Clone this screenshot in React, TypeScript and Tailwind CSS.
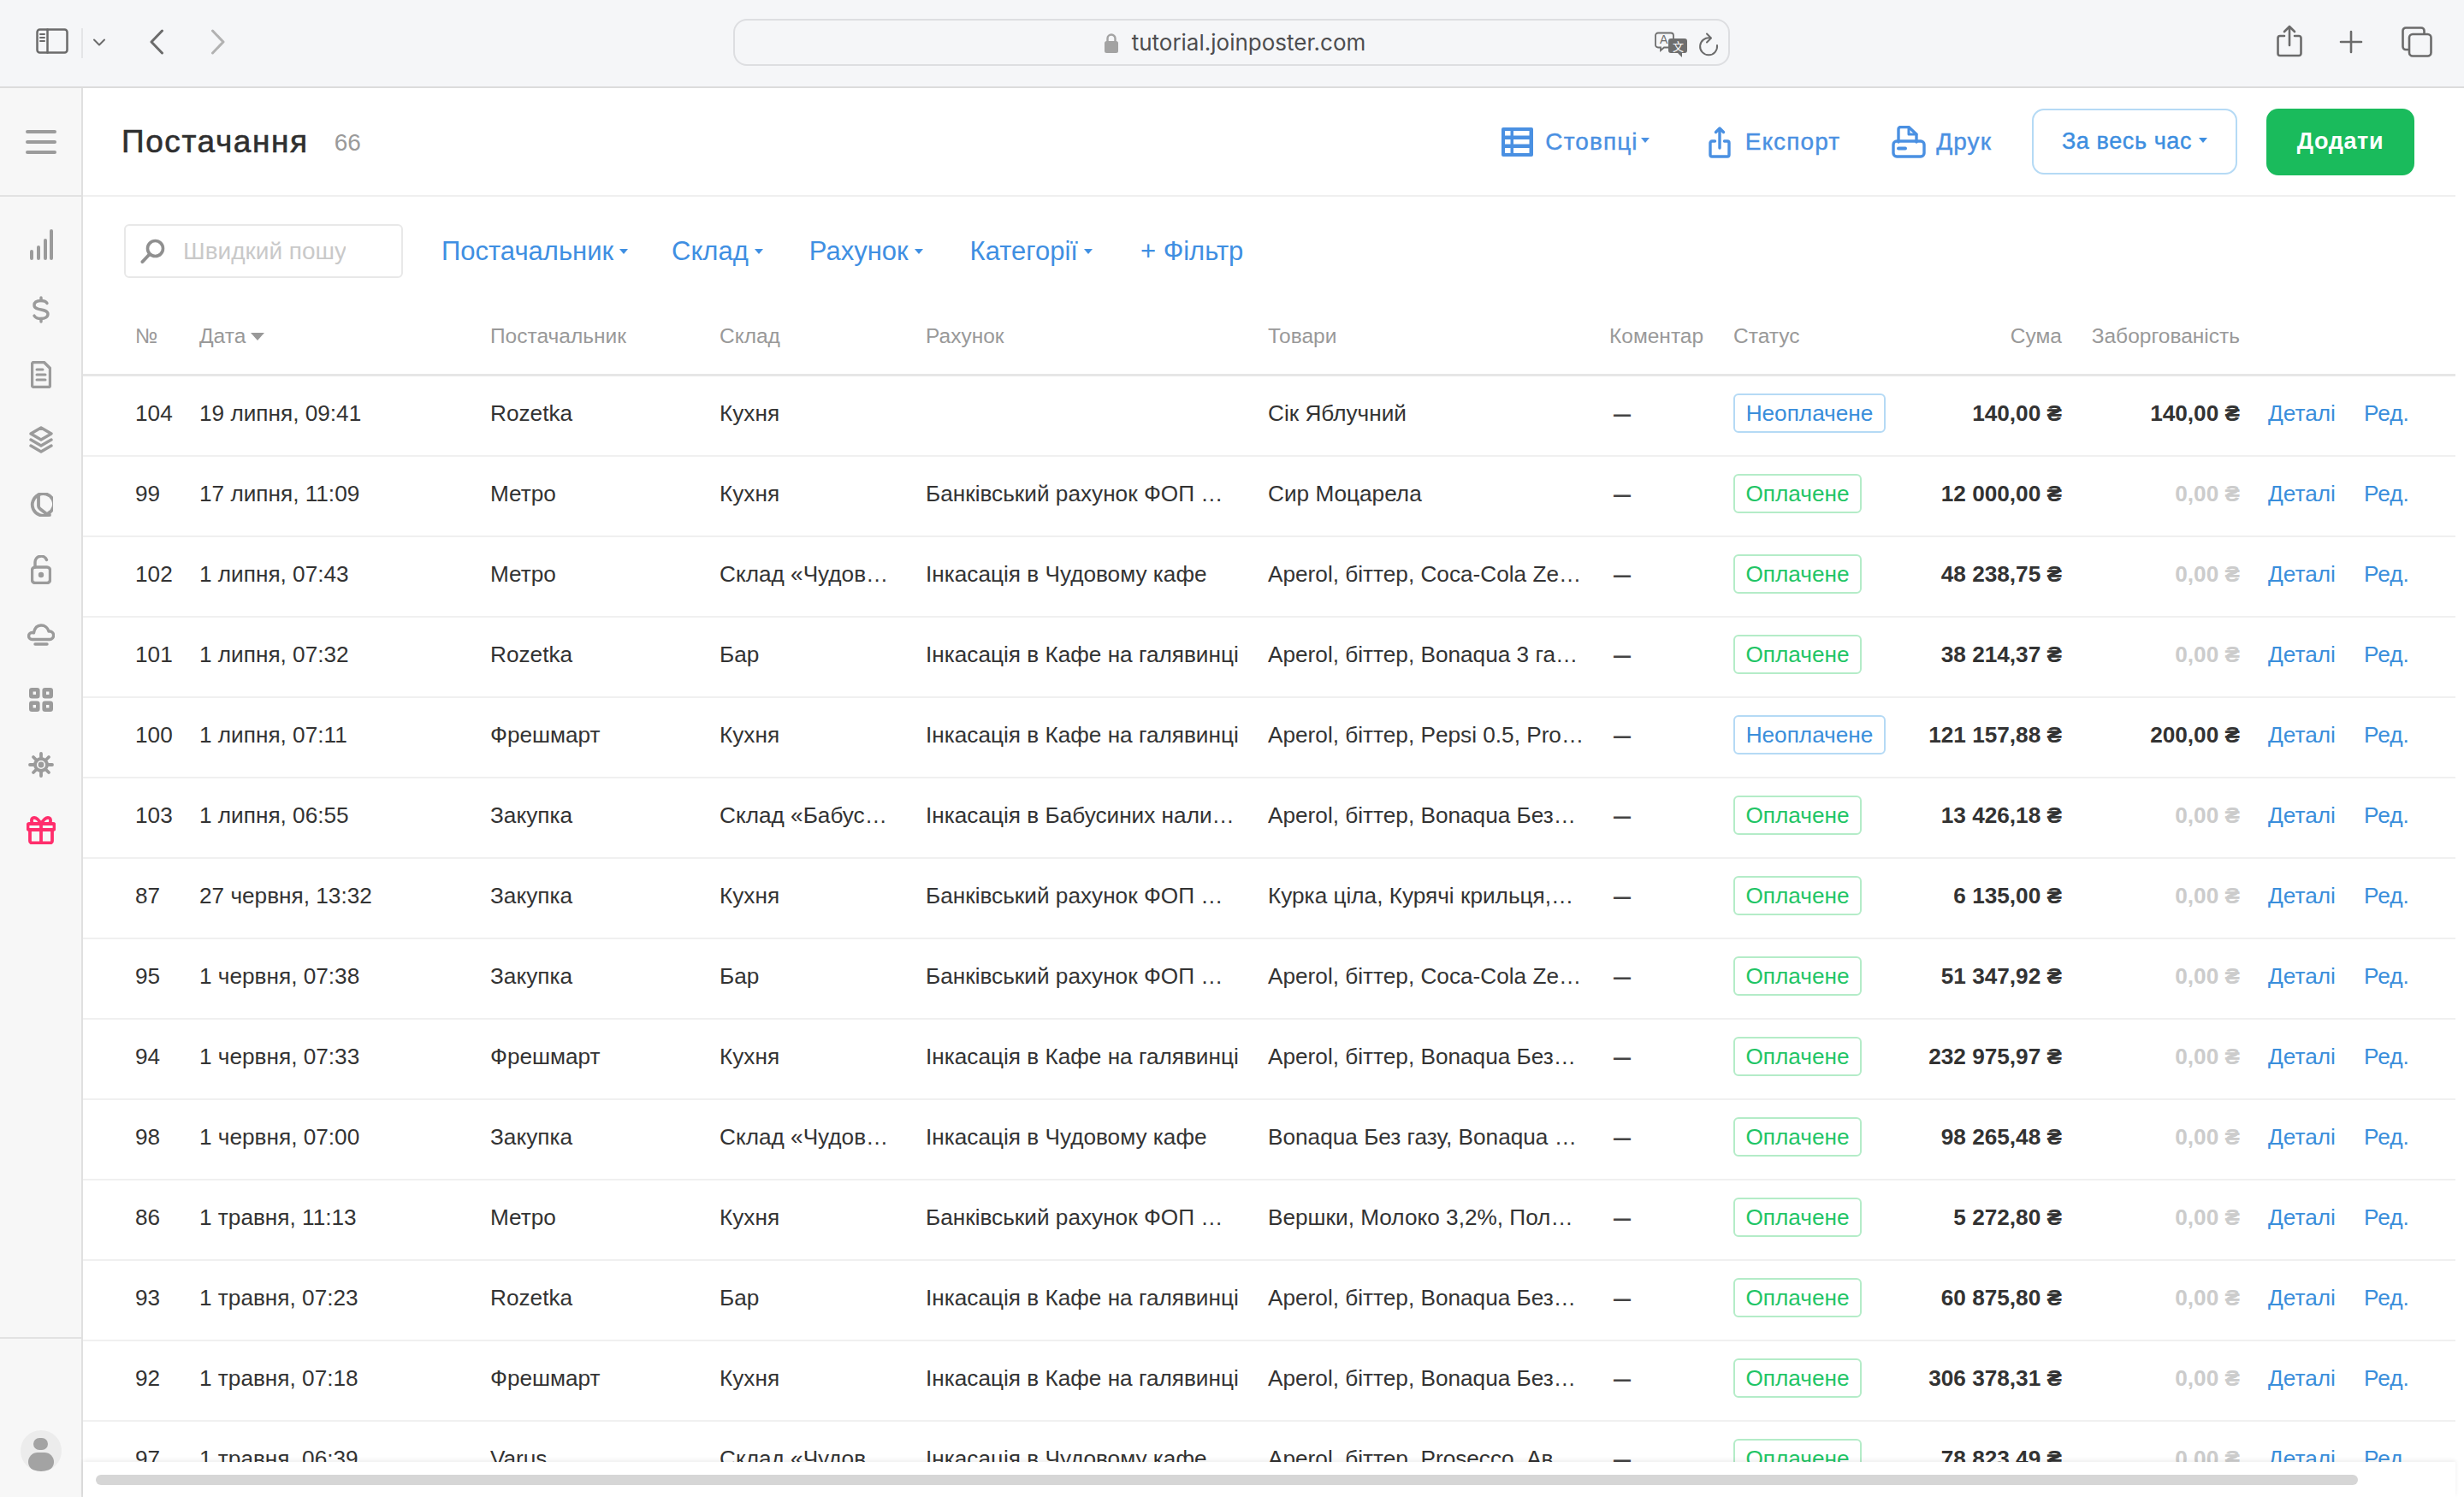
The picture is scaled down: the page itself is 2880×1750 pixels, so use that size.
import { ReactNode } from "react";

const rows = [
  ["104", "19 липня, 09:41", "Rozetka", "Кухня", "", "Сік Яблучний", "no", "140,00 ₴", "140,00 ₴"],
  ["99", "17 липня, 11:09", "Метро", "Кухня", "Банківський рахунок ФОП …", "Сир Моцарела", "yes", "12 000,00 ₴", "0,00 ₴"],
  ["102", "1 липня, 07:43", "Метро", "Склад «Чудов…", "Інкасація в Чудовому кафе", "Aperol, біттер, Coca-Cola Ze…", "yes", "48 238,75 ₴", "0,00 ₴"],
  ["101", "1 липня, 07:32", "Rozetka", "Бар", "Інкасація в Кафе на галявинці", "Aperol, біттер, Bonaqua 3 га…", "yes", "38 214,37 ₴", "0,00 ₴"],
  ["100", "1 липня, 07:11", "Фрешмарт", "Кухня", "Інкасація в Кафе на галявинці", "Aperol, біттер, Pepsi 0.5, Pro…", "no", "121 157,88 ₴", "200,00 ₴"],
  ["103", "1 липня, 06:55", "Закупка", "Склад «Бабус…", "Інкасація в Бабусиних нали…", "Aperol, біттер, Bonaqua Без…", "yes", "13 426,18 ₴", "0,00 ₴"],
  ["87", "27 червня, 13:32", "Закупка", "Кухня", "Банківський рахунок ФОП …", "Курка ціла, Курячі крильця,…", "yes", "6 135,00 ₴", "0,00 ₴"],
  ["95", "1 червня, 07:38", "Закупка", "Бар", "Банківський рахунок ФОП …", "Aperol, біттер, Coca-Cola Ze…", "yes", "51 347,92 ₴", "0,00 ₴"],
  ["94", "1 червня, 07:33", "Фрешмарт", "Кухня", "Інкасація в Кафе на галявинці", "Aperol, біттер, Bonaqua Без…", "yes", "232 975,97 ₴", "0,00 ₴"],
  ["98", "1 червня, 07:00", "Закупка", "Склад «Чудов…", "Інкасація в Чудовому кафе", "Bonaqua Без газу, Bonaqua …", "yes", "98 265,48 ₴", "0,00 ₴"],
  ["86", "1 травня, 11:13", "Метро", "Кухня", "Банківський рахунок ФОП …", "Вершки, Молоко 3,2%, Пол…", "yes", "5 272,80 ₴", "0,00 ₴"],
  ["93", "1 травня, 07:23", "Rozetka", "Бар", "Інкасація в Кафе на галявинці", "Aperol, біттер, Bonaqua Без…", "yes", "60 875,80 ₴", "0,00 ₴"],
  ["92", "1 травня, 07:18", "Фрешмарт", "Кухня", "Інкасація в Кафе на галявинці", "Aperol, біттер, Bonaqua Без…", "yes", "306 378,31 ₴", "0,00 ₴"],
  ["97", "1 травня, 06:39", "Varus", "Склад «Чудов…", "Інкасація в Чудовому кафе", "Aperol, біттер, Prosecco, Ав…", "yes", "78 823,49 ₴", "0,00 ₴"],
];

const gridCols =
  "grid grid-cols-[75px_340px_268px_241px_400px_399px_145px_200px_184px_208px_145px_1fr] pl-[61px]";

function Caret({ className = "" }: { className?: string }) {
  return (
    <span
      className={`inline-block h-0 w-0 border-x-[5px] border-t-[6px] border-x-transparent border-t-current ${className}`}
    />
  );
}

function Stroke({ w, h, sw = 3, children }: { w: number; h: number; sw?: number; children: ReactNode }) {
  return (
    <svg
      width={w}
      height={h}
      viewBox={`0 0 ${w} ${h}`}
      fill="none"
      stroke="currentColor"
      strokeWidth={sw}
      strokeLinecap="round"
      strokeLinejoin="round"
      className="block flex-none"
    >
      {children}
    </svg>
  );
}

function BrowserBar() {
  return (
    <div className="flex h-[103px] flex-none items-start border-b-2 border-[#dcdcdc] bg-[#f5f6f8] text-[#6b6b6b]">
      <div className="ml-[42px] mt-[33px]">
        <Stroke w={38} h={30} sw={2.5}>
          <rect x="1.5" y="1.5" width="35" height="27" rx="3" />
          <path d="M13.5 1.5v27" />
          <path d="M5 7h5M5 11h5M5 15h5" strokeWidth={2} />
        </Stroke>
      </div>
      <div className="ml-[15px] mt-[33px] h-[35px] w-[2px] bg-[#e4e5e7]" />
      <div className="ml-[11px] mt-[45px]">
        <Stroke w={16} h={9} sw={2}>
          <path d="M2 1.5l6 6 6-6" />
        </Stroke>
      </div>
      <div className="ml-[50px] mt-[34px]">
        <Stroke w={18} h={30} sw={3}>
          <path d="M15.5 2L3 15l12.5 13" />
        </Stroke>
      </div>
      <div className="ml-[54px] mt-[34px] text-[#b2b2b2]">
        <Stroke w={18} h={30} sw={3}>
          <path d="M2.5 2L15 15 2.5 28" />
        </Stroke>
      </div>
      <div className="relative ml-[593px] mt-[22px] flex h-[55px] w-[1165px] items-center justify-center rounded-[16px] border-2 border-[#dddee1] pl-[8px]">
        <svg width="16" height="24" viewBox="0 0 16 24" className="mr-[16px] block flex-none" fill="none">
          <path d="M3.5 11V7a4.5 4.5 0 0 1 9 0v4" stroke="#a3a3a3" strokeWidth="2.4" />
          <rect x="0" y="10" width="16" height="14" rx="2.5" fill="#a3a3a3" />
        </svg>
        <span className="font-['Inter',sans-serif] text-[26px] leading-none text-[#4d4d4f]">
          tutorial.joinposter.com
        </span>
        <div className="absolute right-[11px] top-[13px] flex items-center gap-[13px]">
          <svg width="38" height="30" viewBox="0 0 38 30" className="block">
            <path
              d="M4 1.5h15a3 3 0 0 1 3 3v11a3 3 0 0 1-3 3h-8l-4 3.5v-3.5H4a3 3 0 0 1-3-3v-11a3 3 0 0 1 3-3z"
              fill="#f5f6f8"
              stroke="#6e6e6e"
              strokeWidth="1.8"
            />
            <text x="6" y="14" fontSize="14" fill="#6e6e6e" fontFamily="Liberation Sans, sans-serif">
              A
            </text>
            <path
              d="M19 8h16a3 3 0 0 1 3 3v11a3 3 0 0 1-3 3h-3v5l-5-5h-8a3 3 0 0 1-3-3V11a3 3 0 0 1 3-3z"
              fill="#6e6e6e"
            />
            <text x="21" y="22" fontSize="13" fill="#fff" fontFamily="Noto Sans CJK SC, sans-serif">
              文
            </text>
          </svg>
          <Stroke w={24} h={28} sw={2}>
            <path d="M14 6.5A10 10 0 1 0 22 15" />
            <path d="M10 1.5l5 5-5 5" />
          </Stroke>
        </div>
      </div>
      <div className="ml-[639px] mt-[29px]">
        <Stroke w={30} h={38} sw={2.6}>
          <path d="M15 24V2M9 8l6-6 6 6" />
          <path d="M9 13H4a2.5 2.5 0 0 0-2.5 2.5v18A2.5 2.5 0 0 0 4 36h22a2.5 2.5 0 0 0 2.5-2.5v-18A2.5 2.5 0 0 0 26 13h-5" />
        </Stroke>
      </div>
      <div className="ml-[43px] mt-[35px]">
        <Stroke w={28} h={28} sw={2.6}>
          <path d="M14 2v24M2 14h24" />
        </Stroke>
      </div>
      <div className="ml-[45px] mt-[31px]">
        <Stroke w={36} h={36} sw={2.6}>
          <path d="M7.5 27H5a3.5 3.5 0 0 1-3.5-3.5V5A3.5 3.5 0 0 1 5 1.5h18A3.5 3.5 0 0 1 26.5 5v3" />
          <rect x="9" y="9" width="25.5" height="25.5" rx="4" />
        </Stroke>
      </div>
    </div>
  );
}

const navIcons: ReactNode[] = [
  <Stroke key="chart" w={28} h={36} sw={4}>
    <path d="M3 34v-8M11 34V21M19 34V13M26 34V2" />
  </Stroke>,
  <Stroke key="dollar" w={22} h={32} sw={3.4}>
    <path d="M18 8.5c-1-2-3.5-3-7-3-4.5 0-8 1.6-8 5.2 0 7.6 16 3 16 10.4 0 3.6-3.5 5.4-8 5.4-3.5 0-6.5-1-8-3.4" />
    <path d="M11 2v3.5M11 26.5V30" />
  </Stroke>,
  <Stroke key="doc" w={24} h={32} sw={3.4}>
    <path d="M3.5 1.5h12l7 7v20a2 2 0 0 1-2 2h-17a2 2 0 0 1-2-2v-25a2 2 0 0 1 2-2z" />
    <path d="M7 10h7M7 16h10M7 22h10" strokeWidth={3} />
  </Stroke>,
  <Stroke key="layers" w={28} h={32} sw={3.4}>
    <path d="M14 2L26 9 14 16 2 9z" />
    <path d="M2 16l12 7 12-7M2 23l12 7 12-7" />
  </Stroke>,
  <Stroke key="pie" w={28} h={28} sw={3.8}>
    <path d="M11 2.500A11.800 11.800 0 1 0 22 25.500" />
    <path d="M11 2.500a11.800 11.800 0 0 1 11.500 21.500c-.2 1 .5 2 1.500 2" />
    <path d="M11 2.500v13c0 1.500.7 2.500 2 3.500l9 7" />
  </Stroke>,
  <Stroke key="lock" w={24} h={34} sw={3.4}>
    <path d="M5 14V8a7 7 0 0 1 13.500-2.500" />
    <rect x="1.500" y="14" width="21" height="18.500" rx="3.500" />
    <circle cx="12" cy="23" r="1.500" fill="currentColor" />
  </Stroke>,
  <Stroke key="cloud" w={32} h={26} sw={3.4}>
    <path d="M6 18.500H5.500a4 4 0 0 1 0-8c1 0 2 .3 2 .3C8.500 5 12 2 16 2c4.500 0 8 3 9 7h1.500a4.800 4.800 0 0 1 0 9.500z" />
    <path d="M9 24h14" />
  </Stroke>,
  <Stroke key="grid" w={28} h={28} sw={4.600}>
    <rect x="2.300" y="2.300" width="8" height="8" rx="1" />
    <rect x="17.700" y="2.300" width="8" height="8" rx="1" />
    <rect x="2.300" y="17.700" width="8" height="8" rx="1" />
    <rect x="17.700" y="17.700" width="8" height="8" rx="1" />
  </Stroke>,
  <Stroke key="gear" w={30} h={30} sw={3.800}>
    <circle cx="15" cy="15" r="7" />
    <circle cx="15" cy="15" r="1.500" fill="currentColor" />
    <path d="M15 2v5M15 23v5M2 15h5M23 15h5M6 6l3.500 3.500M20.500 20.500L24 24M24 6l-3.500 3.500M9.500 20.500L6 24" />
  </Stroke>,
];

function Sidebar() {
  return (
    <aside className="flex w-[97px] flex-none flex-col border-r-2 border-[#e0e0e0] bg-[#f7f7f7] text-[#9b9b9b]">
      <div className="flex h-[127px] flex-none items-center justify-center border-b-2 border-[#e2e2e2]">
        <div className="flex w-[36px] flex-col gap-[8px]">
          <div className="h-[4px] rounded-full bg-[#9b9b9b]" />
          <div className="h-[4px] rounded-full bg-[#9b9b9b]" />
          <div className="h-[4px] rounded-full bg-[#9b9b9b]" />
        </div>
      </div>
      <nav className="flex flex-1 flex-col items-center pt-[18px]">
        {navIcons.map((icon, i) => (
          <div key={i} className="flex h-[76px] w-full items-center justify-center">
            {icon}
          </div>
        ))}
        <div className="flex h-[76px] w-full items-center justify-center text-[#ff2e6c]">
          <Stroke w={34} h={34} sw={3.800}>
            <path d="M3 10h28a1.500 1.500 0 0 1 1.500 1.500v4a1.500 1.500 0 0 1-1.500 1.500H3a1.500 1.500 0 0 1-1.500-1.500v-4A1.500 1.500 0 0 1 3 10z" />
            <path d="M4 17v13a2.500 2.500 0 0 0 2.500 2.500h21A2.500 2.500 0 0 0 30 30V17M17 10v22.500" />
            <path d="M17 10c-3-5-6-8-9-7s-2.500 6 0 7M17 10c3-5 6-8 9-7s2.500 6 0 7" />
          </Stroke>
        </div>
      </nav>
      <div className="flex h-[187px] flex-none justify-center border-t-2 border-[#e2e2e2] pt-[107px]">
        <div className="flex h-[48px] w-[48px] flex-col items-center overflow-hidden rounded-full bg-[#ececec] pt-[9px]">
          <div className="h-[17px] w-[17px] rounded-full bg-[#a3a3a3]" />
          <div className="mt-[3px] h-[26px] w-[30px] rounded-full bg-[#a3a3a3]" />
        </div>
      </div>
    </aside>
  );
}

function Toolbar() {
  return (
    <div className="flex h-[127px] flex-none items-center border-b-2 border-[#efefef] pl-[45px]">
      <h1 className="text-[37px] font-normal leading-none tracking-[1.6px] text-[#2f2f2f] [-webkit-text-stroke:0.6px_#2f2f2f]">
        Постачання
      </h1>
      <span className="ml-[30px] mt-[3px] text-[28px] leading-none text-[#9a9a9a]">66</span>
      <div className="ml-auto flex items-center text-[28px] tracking-[1.1px] text-[#4a90e2] [-webkit-text-stroke:0.4px_currentColor]">
        <svg width="37" height="34" viewBox="0 0 37 34" className="block flex-none">
          <rect width="37" height="34" rx="2" fill="#4a90e2" />
          <path
            fill="#fff"
            d="M4 4h6.500v5.500H4zM14 4h18.500v5.500H14zM4 14h6.500v5.500H4zM14 14h18.500v5.500H14zM4 24h6.500v6H4zM14 24h18.500v6H14z"
          />
        </svg>
        <span className="ml-[14px]">Стовпці</span>
        <Caret className="ml-[3px] mt-[-3px]" />
        <div className="ml-[69px]">
          <Stroke w={26} h={38} sw={3.400}>
            <path d="M13 26V3M8.500 7.500L13 3l4.500 4.500" />
            <path d="M7.500 18H4a2 2 0 0 0-2 2v14a2 2 0 0 0 2 2h18a2 2 0 0 0 2-2V20a2 2 0 0 0-2-2h-3.500" />
          </Stroke>
        </div>
        <span className="ml-[17px]">Експорт</span>
        <div className="ml-[60px]">
          <Stroke w={40} h={38} sw={3.400}>
            <path d="M8 19V4a2.500 2.500 0 0 1 2.500-2.500H20l9 8.500v9" />
            <path d="M20 2v8h9" strokeWidth={3} />
            <rect x="2" y="18" width="36" height="18" rx="4" />
            <path d="M8 26.500h8" strokeWidth={4} />
          </Stroke>
        </div>
        <span className="ml-[12px]">Друк</span>
        <button className="ml-[47px] flex h-[77px] w-[240px] items-center justify-center rounded-[14px] border-2 border-[#b5daf5] text-[27px] tracking-[0.6px] text-[#3d8ee0]">
          <span>За весь час</span>
          <Caret className="ml-[8px] mt-[-3px]" />
        </button>
        <button className="ml-[34px] mr-[48px] flex h-[78px] w-[173px] items-center justify-center rounded-[14px] bg-[#1abb5c] text-[27px] font-semibold tracking-[0.6px] text-white [-webkit-text-stroke:0]">
          Додати
        </button>
      </div>
    </div>
  );
}

function Filters() {
  const items = [
    ["Постачальник", "ml-[45px]"],
    ["Склад", "ml-[51px]"],
    ["Рахунок", "ml-[54px]"],
    ["Категорії", "ml-[55px]"],
  ];
  return (
    <div className="flex h-[118px] flex-none items-start pl-[48px] pt-[32px]">
      <div className="flex h-[63px] w-[326px] flex-none items-center rounded-[6px] border-2 border-[#e8e8e8] pl-[17px]">
        <svg width="30" height="30" viewBox="0 0 30 30" fill="none" className="block flex-none">
          <circle cx="17.500" cy="11.500" r="9" stroke="#8f8f8f" strokeWidth="3.600" />
          <path d="M10.500 18.500L2.500 27" stroke="#8f8f8f" strokeWidth="4" strokeLinecap="round" />
        </svg>
        <input
          readOnly
          placeholder="Швидкий пошук"
          className="ml-[20px] w-[190px] bg-transparent text-[28px] leading-none outline-none placeholder:text-[#c9c9c9]"
        />
      </div>
      <div className="flex h-[63px] items-center text-[31px] leading-none text-[#3f8fe2]">
        {items.map(([label, ml]) => (
          <div key={label} className={`flex items-center ${ml}`}>
            <span>{label}</span>
            <Caret className="ml-[7px]" />
          </div>
        ))}
        <span className="ml-[56px]">+ Фільтр</span>
      </div>
    </div>
  );
}

function HeadRow() {
  return (
    <div className={`${gridCols} h-[92px] flex-none items-center border-b-[3px] border-[#e6e6e6] pt-[2px] text-[24.5px] text-[#999]`}>
      <span>№</span>
      <span className="flex items-center gap-[6px]">
        Дата
        <Caret className="border-x-[8px] border-t-[9px]" />
      </span>
      <span>Постачальник</span>
      <span>Склад</span>
      <span>Рахунок</span>
      <span>Товари</span>
      <span>Коментар</span>
      <span>Статус</span>
      <span className="text-right">Сума</span>
      <span className="text-right">Заборгованість</span>
    </div>
  );
}

function Row({ row }: { row: string[] }) {
  const paid = row[6] === "yes";
  return (
    <div className={`${gridCols} h-[94px] flex-none items-center whitespace-nowrap border-b-2 border-[#f0f0f0] pb-[6px] text-[26.2px] leading-none text-[#333]`}>
      <span>{row[0]}</span>
      <span>{row[1]}</span>
      <span>{row[2]}</span>
      <span>{row[3]}</span>
      <span>{row[4]}</span>
      <span>{row[5]}</span>
      <span className="pl-[5px] text-[36px] text-[#444]">–</span>
      <span>
        <span
          className={
            paid
              ? "inline-flex h-[46px] w-[150px] items-center justify-center rounded-[6px] border-2 border-[#b4ecc8] text-[#1fc566]"
              : "inline-flex h-[46px] w-[178px] items-center justify-center rounded-[6px] border-2 border-[#b5daf5] text-[#3a8edb]"
          }
        >
          {paid ? "Оплачене" : "Неоплачене"}
        </span>
      </span>
      <span className="text-right font-bold">{row[7]}</span>
      <span className={`text-right font-bold ${row[8] === "0,00 ₴" ? "text-[#cccccc]" : ""}`}>{row[8]}</span>
      <span className="pl-[33px] text-[#3a8edb]">Деталі</span>
      <span className="text-[#3a8edb]">Ред.</span>
    </div>
  );
}

export default function App() {
  return (
    <div className="flex h-[1750px] w-[2880px] flex-col overflow-hidden bg-white font-['Liberation_Sans',Arial,sans-serif]">
      <BrowserBar />
      <div className="flex min-h-0 flex-1">
        <Sidebar />
        <main className="flex min-w-0 flex-1 flex-col pr-[10px]">
          <Toolbar />
          <Filters />
          <HeadRow />
          <div className="min-h-0 flex-1 overflow-hidden">
            {rows.map((row) => (
              <Row key={row[0]} row={row} />
            ))}
          </div>
          <div className="relative z-10 h-[41px] flex-none bg-white pl-[15px] pt-[15px] shadow-[0_-2px_5px_rgba(0,0,0,0.07)]">
            <div className="h-[12px] w-[2644px] rounded-full bg-[#d6d6d6]" />
          </div>
        </main>
      </div>
    </div>
  );
}
